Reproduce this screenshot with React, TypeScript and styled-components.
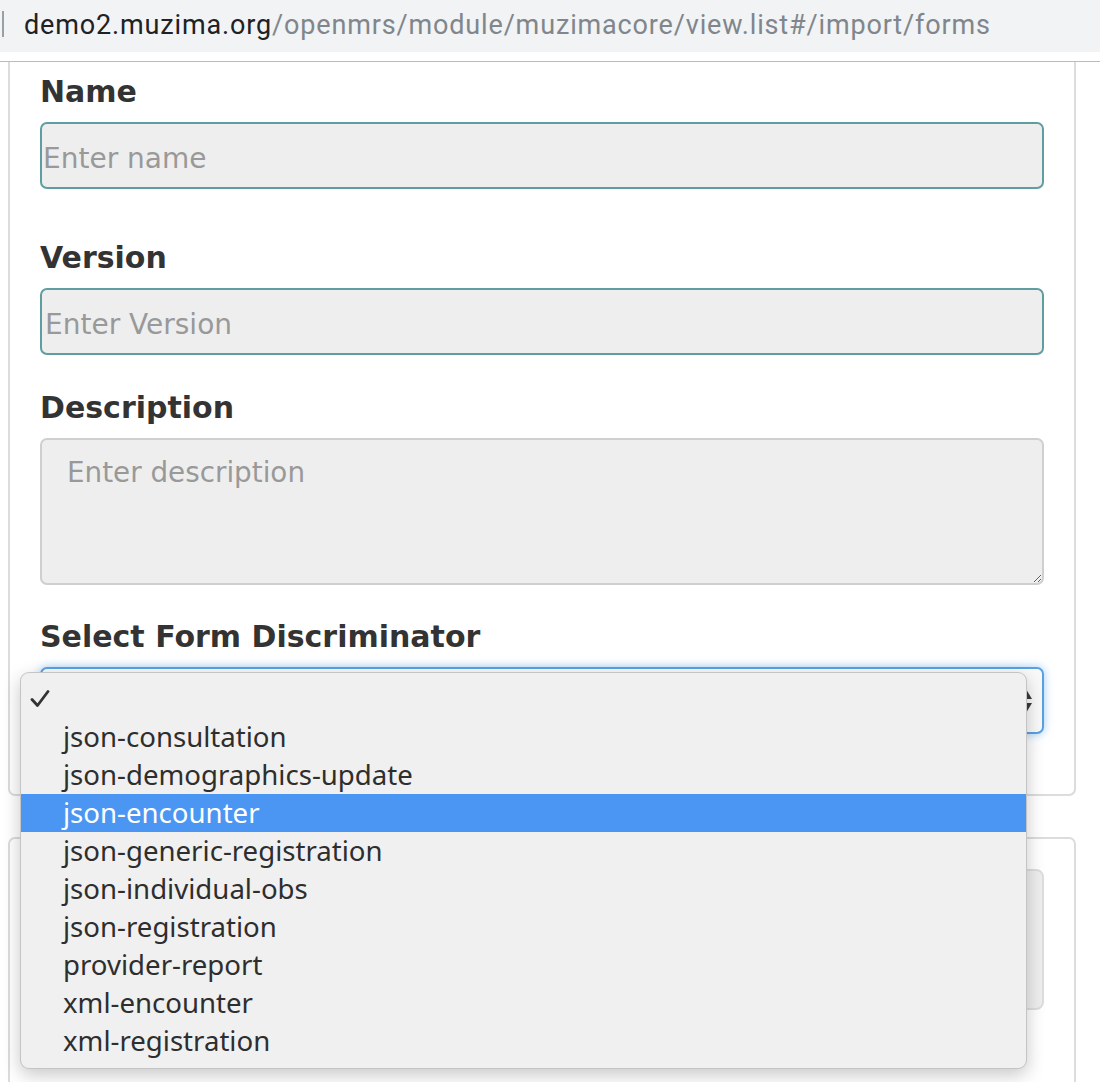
import React from "react";
import styled, { createGlobalStyle } from "styled-components";

const Global = createGlobalStyle`
  html, body { margin: 0; padding: 0; background: #fff; }
  body { font-family: "DejaVu Sans", Verdana, sans-serif; }
`;

const AddressBar = styled.div`
  height: 52px;
  background: #f1f3f4;
  display: flex;
  align-items: center;
  font-family: Roboto, "Liberation Sans", sans-serif;
  font-size: 27px;
  letter-spacing: 0.85px;
  color: #80868b;
  padding-left: 2px;
`;

const Caret = styled.span`
  width: 2px;
  height: 26px;
  background: #9aa0a6;
  margin-right: 20px;
  margin-top: -4px;
`;

const Host = styled.span`
  color: #202124;
`;

const UrlText = styled.span`
  margin-top: -2px;
  white-space: nowrap;
`;

const Divider = styled.div`
  margin-top: 9px;
  height: 1px;
  background: #bcbcbc;
`;

const Page = styled.div`
  padding: 0 24px 0 8px;
`;

const Panel = styled.div<{ $top?: boolean }>`
  border: 2px solid #dcdcdc;
  border-top: ${(p) => (p.$top ? "none" : "2px solid #dcdcdc")};
  border-radius: ${(p) => (p.$top ? "0 0 7px 7px" : "7px 7px 0 0")};
  padding: ${(p) => (p.$top ? "10px 30px 60px 30px" : "30px 30px 0 30px")};
  margin-top: ${(p) => (p.$top ? "0" : "41px")};
  height: ${(p) => (p.$top ? "auto" : "300px")};
`;

const Field = styled.div<{ $gap: number }>`
  display: flex;
  flex-direction: column;
  margin-bottom: ${(p) => p.$gap}px;
  position: relative;
`;

const Label = styled.label`
  font-family: "DejaVu Sans", Verdana, sans-serif;
  font-weight: bold;
  font-size: 30px;
  line-height: 40px;
  color: #333;
  margin-bottom: 10px;
`;

const TextInput = styled.input<{ $indent: number }>`
  box-sizing: border-box;
  height: 67px;
  border: 2px solid #5f9ea0;
  border-radius: 7px;
  background: #eeeeee;
  padding: 5px 0 0 ${(p) => p.$indent}px;
  font-family: "DejaVu Sans", Verdana, sans-serif;
  font-size: 28px;
  color: #555;
  outline: none;
  &::placeholder { color: #999; }
`;

const TextArea = styled.textarea`
  box-sizing: border-box;
  height: 147px;
  border: 2px solid #cfcfcf;
  border-radius: 7px;
  background: #eeeeee;
  padding: 13px 25px;
  font-family: "DejaVu Sans", Verdana, sans-serif;
  font-size: 27.8px;
  line-height: 40px;
  color: #555;
  outline: none;
  &::placeholder { color: #999; }
`;

const SelectBox = styled.div`
  box-sizing: border-box;
  height: 67px;
  border: 2px solid #5aa1e2;
  border-radius: 7px;
  background: #f9f9f9;
  box-shadow: 0 0 10px rgba(82, 160, 236, 0.55);
  display: flex;
  align-items: center;
  justify-content: flex-end;
  padding-right: 9px;
`;

const Menu = styled.ul`
  position: absolute;
  left: -20px;
  top: 55px;
  width: 1007px;
  box-sizing: border-box;
  margin: 0;
  padding: 7px 0 8px 0;
  list-style: none;
  background: #f0f0f0;
  border: 1px solid rgba(0, 0, 0, 0.18);
  border-radius: 9px;
  box-shadow: 0 6px 18px rgba(0, 0, 0, 0.22);
  z-index: 10;
`;

const Item = styled.li<{ $active?: boolean }>`
  height: 38px;
  display: flex;
  align-items: center;
  padding: 0 0 2px 42px;
  box-sizing: border-box;
  position: relative;
  font-family: "Noto Sans", "Open Sans", sans-serif;
  font-size: 27.6px;
  color: ${(p) => (p.$active ? "#fff" : "#2e2e2e")};
  background: ${(p) => (p.$active ? "#4a96f2" : "transparent")};
`;

const Check = styled.svg`
  position: absolute;
  left: 9px;
  top: 10px;
`;

const InnerBox = styled.div`
  height: 141px;
  box-sizing: border-box;
  border: 2px solid #dddddd;
  border-radius: 8px;
  background: #eeeeee;
`;

const options = [
  "json-consultation",
  "json-demographics-update",
  "json-encounter",
  "json-generic-registration",
  "json-individual-obs",
  "json-registration",
  "provider-report",
  "xml-encounter",
  "xml-registration",
];

export default function App() {
  return (
    <>
      <Global />
      <AddressBar>
        <Caret />
        <UrlText>
          <Host>demo2.muzima.org</Host>/openmrs/module/muzimacore/view.list#/import/forms
        </UrlText>
      </AddressBar>
      <Divider />
      <Page>
        <Panel $top>
          <Field $gap={49}>
            <Label>Name</Label>
            <TextInput $indent={1} placeholder="Enter name" readOnly />
          </Field>
          <Field $gap={33}>
            <Label>Version</Label>
            <TextInput $indent={3} placeholder="Enter Version" readOnly />
          </Field>
          <Field $gap={32}>
            <Label>Description</Label>
            <TextArea placeholder="Enter description" readOnly />
          </Field>
          <Field $gap={0}>
            <Label>Select Form Discriminator</Label>
            <SelectBox>
              <svg width="14" height="26" viewBox="0 0 14 26">
                <path d="M7 1 L13 11 L1 11 Z" fill="#3a3a3a" />
                <path d="M1 15 L13 15 L7 25 Z" fill="#3a3a3a" />
              </svg>
            </SelectBox>
            <Menu>
              <Item>
                <Check width="20" height="18" viewBox="0 0 20 18">
                  <path
                    d="M2 9.5 L7.5 15.5 L18 1.5"
                    fill="none"
                    stroke="#333"
                    strokeWidth="2.8"
                    strokeLinecap="round"
                    strokeLinejoin="round"
                  />
                </Check>
              </Item>
              {options.map((o) => (
                <Item key={o} $active={o === "json-encounter"}>
                  {o}
                </Item>
              ))}
            </Menu>
          </Field>
        </Panel>
        <Panel>
          <InnerBox />
        </Panel>
      </Page>
    </>
  );
}
